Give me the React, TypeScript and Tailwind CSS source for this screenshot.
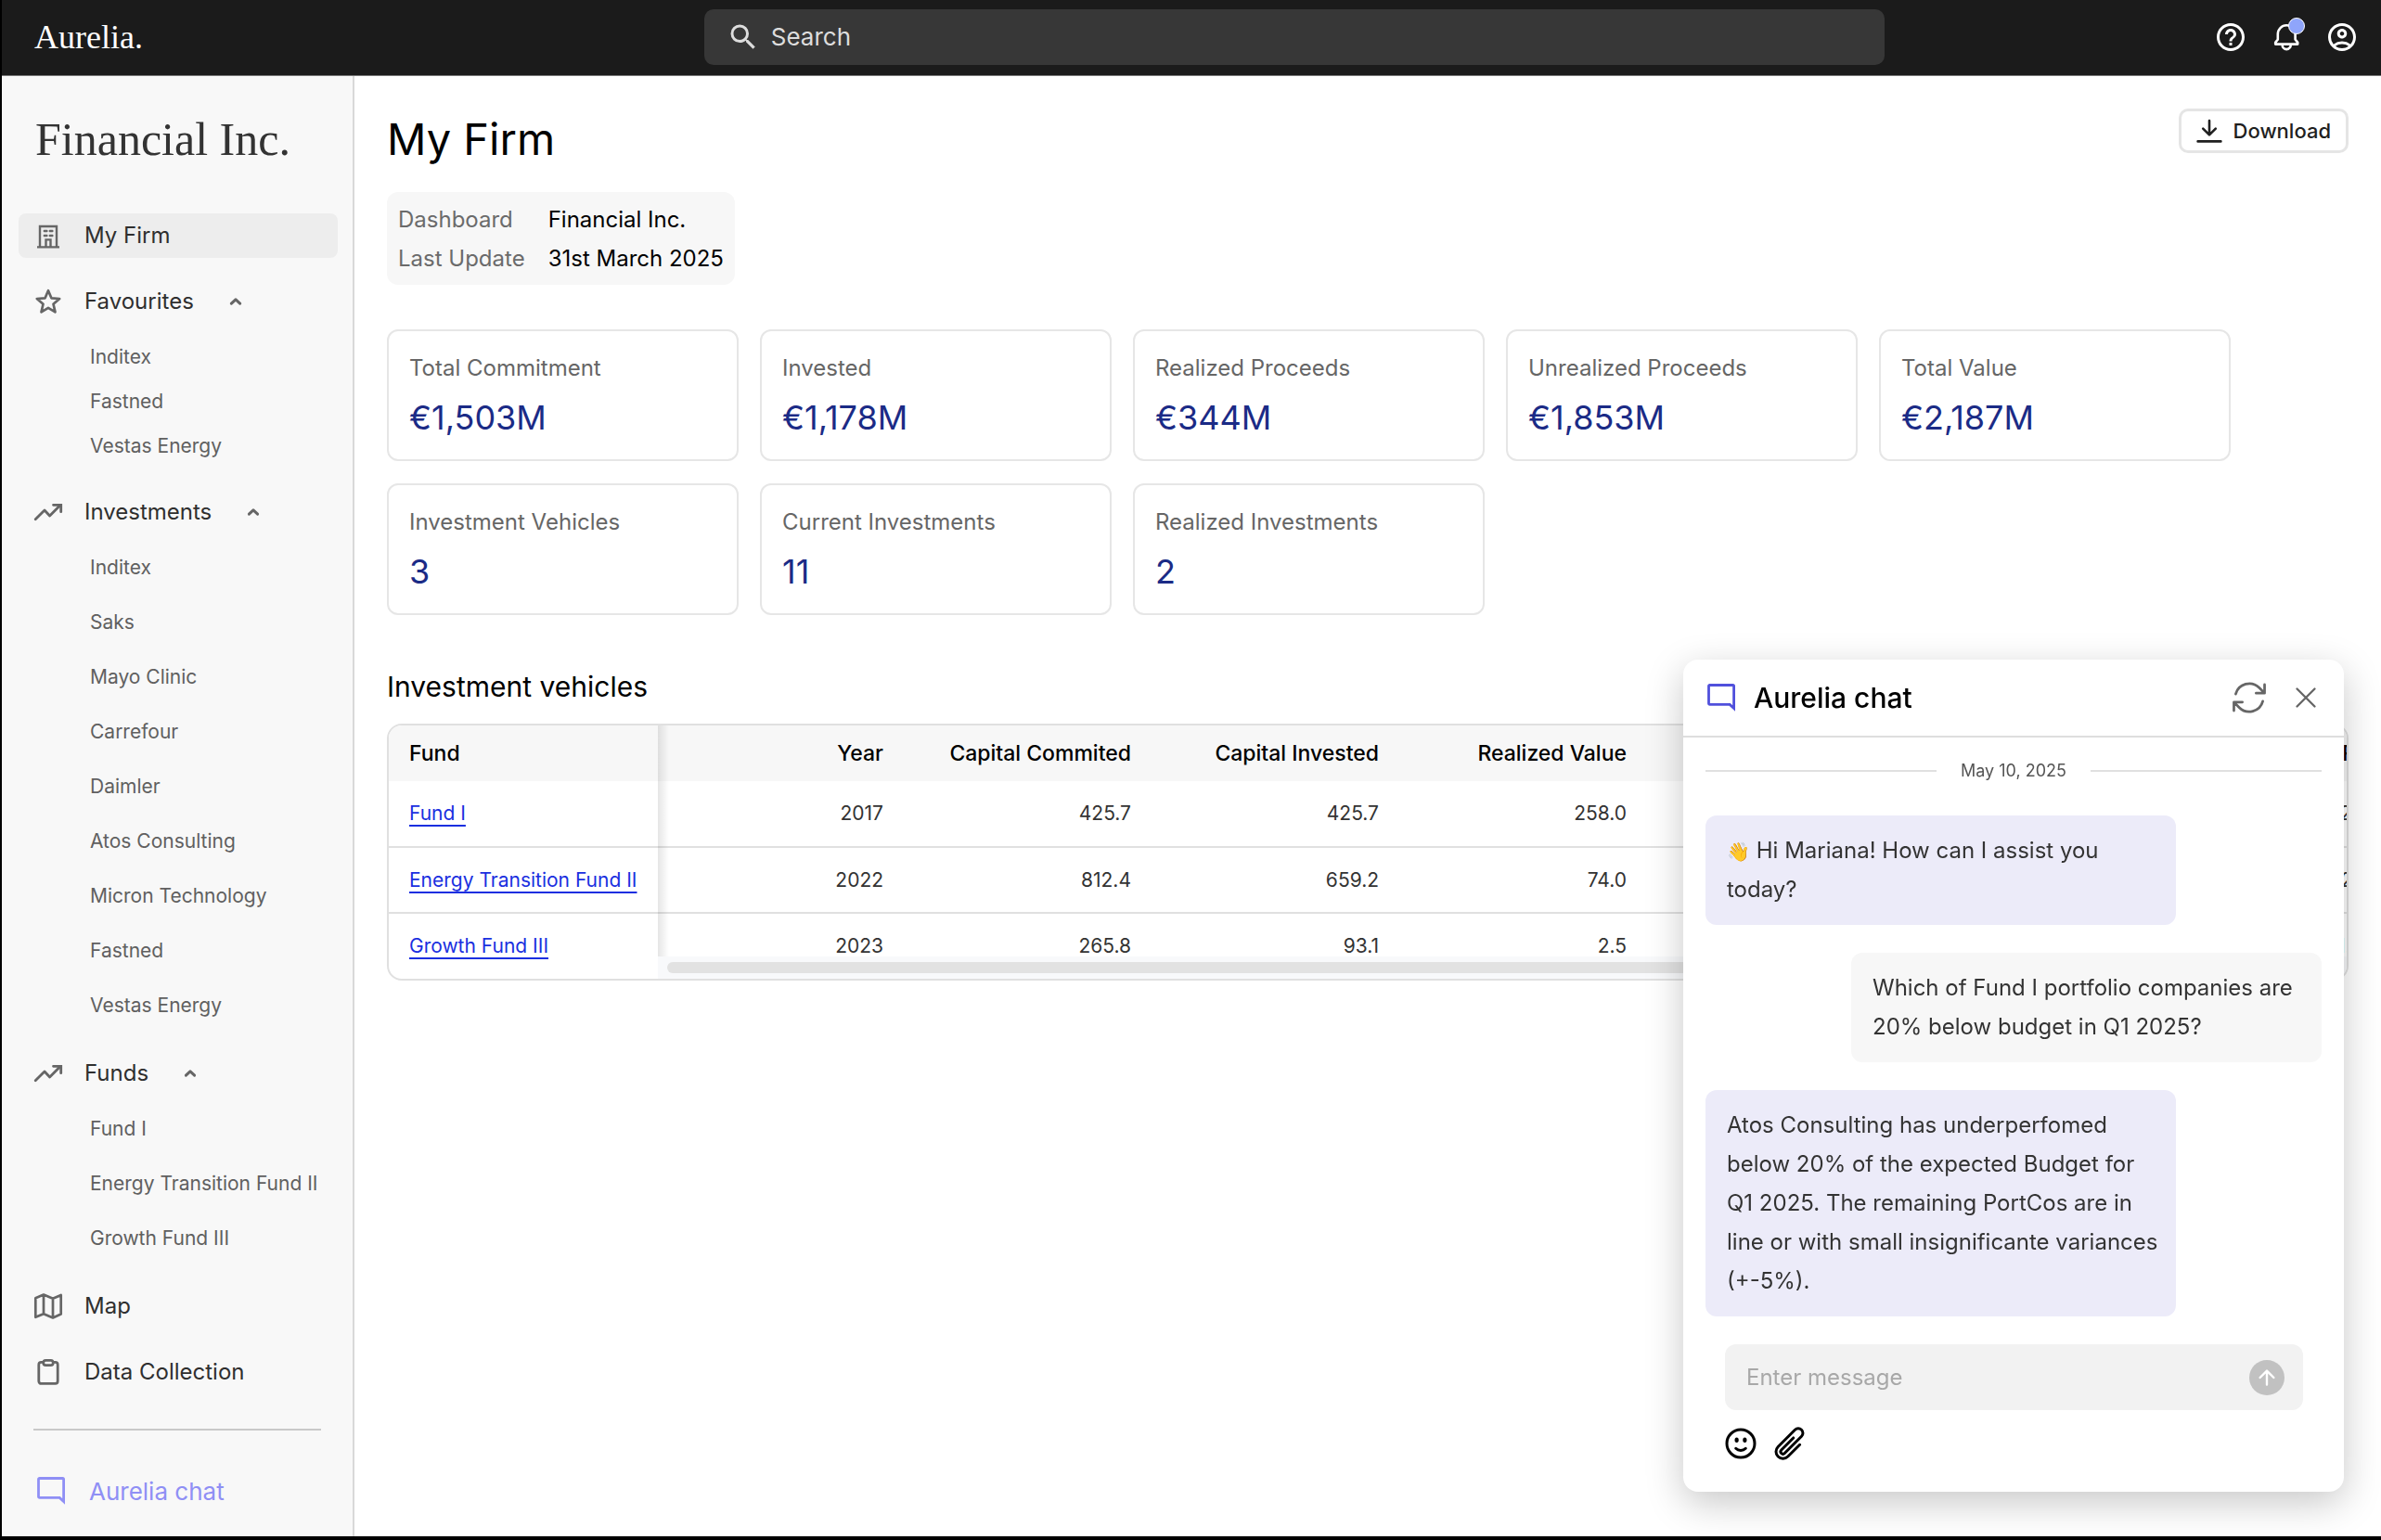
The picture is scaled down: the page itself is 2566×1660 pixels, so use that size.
import type { ReactNode } from "react";
import { MdHelpOutline, MdOutlineAccountCircle, MdSearch } from "react-icons/md";
import { HiOutlineArrowPath, HiOutlineFaceSmile, HiOutlinePaperClip, HiOutlineXMark } from "react-icons/hi2";

interface NavItem {
  label: string;
  icon: ReactNode;
  active?: boolean;
  compact?: boolean;
  children?: string[];
}

interface IconProps {
  className?: string;
}

const BuildingIcon = () => (
  <svg viewBox="0 0 32 32" className="h-8 w-8" fill="none" stroke="currentColor" strokeWidth="2.4">
    <path d="M7 28V6h18v22M4 28.4h24M13.5 28v-7.6h5V28" />
    <path d="M11.8 11h2.6M17.8 11h2.6M11.8 16h2.6M17.8 16h2.6" strokeLinecap="round" />
  </svg>
);

const StarIcon = () => (
  <svg viewBox="0 0 32 32" className="h-8 w-8" fill="none" stroke="currentColor" strokeWidth="2.7" strokeLinejoin="round">
    <path d="m16 4.2 3.4 8.1 8.8.7-6.7 5.8 2 8.6-7.5-4.6-7.5 4.6 2-8.6L3.8 13l8.8-.7Z" />
  </svg>
);

const TrendIcon = () => (
  <svg viewBox="0 0 32 32" className="h-8 w-8" fill="none" stroke="currentColor" strokeWidth="2.8" strokeLinecap="round">
    <path d="M2.2 23.8 12 14l5.6 6L29 8.6" strokeLinejoin="round" />
    <path d="M21.5 8.3h8.2v7.4" />
  </svg>
);

const MapIcon = () => (
  <svg viewBox="0 0 32 32" className="h-8 w-8" fill="none" stroke="currentColor" strokeWidth="2.7" strokeLinejoin="round">
    <path d="M2.3 7.2 11 3.6l10 4.2 8.7-3.8v20.6L21 28.4l-10-4.2-8.7 3.6ZM11 3.6v20.6M21 7.8v20.6" />
  </svg>
);

const ClipboardIcon = () => (
  <svg viewBox="0 0 32 32" className="h-8 w-8" fill="none" stroke="currentColor" strokeWidth="2.8">
    <rect x="5.8" y="5.4" width="20.4" height="23" rx="2.6" />
    <rect x="10.8" y="3.4" width="10.4" height="5.2" rx="2.4" fill="#f8f8f8" />
  </svg>
);

const ChatIcon = ({ className }: IconProps) => (
  <svg viewBox="0 0 30 30" className={className} fill="none" stroke="currentColor" strokeWidth="2.8">
    <path d="M28.6 26.6 24.2 22.4H2.6a1.1 1.1 0 0 1-1.1-1.1V2.6a1.1 1.1 0 0 1 1.1-1.1h24.9a1.1 1.1 0 0 1 1.1 1.1Z" />
  </svg>
);

const BellIcon = () => (
  <svg viewBox="0 0 36 36" className="h-9 w-9" fill="none" stroke="currentColor" strokeWidth="2.6" strokeLinejoin="round">
    <path d="M8.8 20.5v-5.8a9.4 9.4 0 0 1 18.8 0v5.8l2.6 3.4v1.7H6.2v-1.7Z" />
    <path d="M13.6 26.2a4.6 4.9 0 0 0 9.2 0" />
  </svg>
);

const DownloadIcon = () => (
  <svg viewBox="0 0 28 28" className="h-7 w-7" fill="none" stroke="currentColor" strokeWidth="2.6" strokeLinecap="round" strokeLinejoin="round">
    <path d="M14 3v15M7.2 11.6 14 18.4l6.8-6.8M1.6 25.4h24.8" />
  </svg>
);

const ChevronUp = () => (
  <svg viewBox="0 0 24 24" className="h-6 w-6 text-[#666666]" fill="none" stroke="currentColor" strokeWidth="3" strokeLinecap="round" strokeLinejoin="round">
    <path d="m7.4 14.2 4.6-4.4 4.6 4.4" />
  </svg>
);

const navItems: NavItem[] = [
  { label: "My Firm", icon: <BuildingIcon />, active: true },
  { label: "Favourites", icon: <StarIcon />, compact: true, children: ["Inditex", "Fastned", "Vestas Energy"] },
  {
    label: "Investments",
    icon: <TrendIcon />,
    children: [
      "Inditex",
      "Saks",
      "Mayo Clinic",
      "Carrefour",
      "Daimler",
      "Atos Consulting",
      "Micron Technology",
      "Fastned",
      "Vestas Energy",
    ],
  },
  { label: "Funds", icon: <TrendIcon />, children: ["Fund I", "Energy Transition Fund II", "Growth Fund III"] },
  { label: "Map", icon: <MapIcon /> },
  { label: "Data Collection", icon: <ClipboardIcon /> },
];

const stats = [
  { label: "Total Commitment", value: "€1,503M" },
  { label: "Invested", value: "€1,178M" },
  { label: "Realized Proceeds", value: "€344M" },
  { label: "Unrealized Proceeds", value: "€1,853M" },
  { label: "Total Value", value: "€2,187M" },
  { label: "Investment Vehicles", value: "3" },
  { label: "Current Investments", value: "11" },
  { label: "Realized Investments", value: "2" },
];

const columns = ["Year", "Capital Commited", "Capital Invested", "Realized Value", "Unrealized Value", "Total Value", "IRR"];

const funds = [
  { name: "Fund I", values: ["2017", "425.7", "425.7", "258.0", "635.2", "893.2", "2.4"] },
  { name: "Energy Transition Fund II", values: ["2022", "812.4", "659.2", "74.0", "1,108.3", "1,182.3", "2.0"] },
  { name: "Growth Fund III", values: ["2023", "265.8", "93.1", "2.5", "109.5", "112.0", "1.14"] },
];

const Header = () => (
  <header className="flex h-[82px] items-center border-b border-[#777777] bg-[#1b1b1b] pr-6 pb-[2px] pl-[35px] text-white">
    <a href="#" className="flex-[24] font-['Liberation_Serif',serif] text-[36px] leading-none">
      Aurelia.
    </a>
    <label className="flex h-[60px] w-[1272px] items-center gap-3 rounded-[10px] bg-[#373737] px-6">
      <MdSearch size={36} className="shrink-0 text-[#dddddd]" />
      <input
        type="search"
        aria-label="Search"
        placeholder="Search"
        className="w-full bg-transparent text-[26px] outline-none placeholder:text-[#dddddd]"
      />
    </label>
    <div className="flex flex-[17] items-center justify-end gap-6">
      <button aria-label="Help">
        <MdHelpOutline size={36} />
      </button>
      <button aria-label="Notifications" className="relative">
        <BellIcon />
        <span className="absolute -top-[3px] right-[-2px] h-[18px] w-[18px] rounded-full border border-white bg-[#8fa5fb]" />
      </button>
      <button aria-label="Account">
        <MdOutlineAccountCircle size={36} />
      </button>
    </div>
  </header>
);

const Sidebar = () => (
  <aside className="w-[380px] shrink-0 border-r-2 border-[#d9d9d9] bg-[#f8f8f8] px-[18px] pt-[38px]">
    <h2 className="pl-[18px] font-['Liberation_Serif',serif] text-[50px] leading-[60px] text-[#333333]">Financial Inc.</h2>
    <nav className="mt-[50px] mr-[-2px] flex flex-col gap-[23px]">
      {navItems.map((item) => (
        <div key={item.label}>
          <a
            href="#"
            className={`flex h-12 items-center rounded-lg px-4 text-2xl text-[#2f2f2f] ${item.active ? "bg-[#ededed]" : ""}`}
          >
            <span className="mr-[23px] text-[#666666]">{item.icon}</span>
            <span className="mr-[33px]">{item.label}</span>
            {item.children && <ChevronUp />}
          </a>
          {item.children && (
            <ul className={item.compact ? "mt-3" : "mt-[6px] mb-[-3px]"}>
              {item.children.map((child) => (
                <li key={child} className={`flex items-center pl-[77px] ${item.compact ? "h-12" : "h-[59px]"}`}>
                  <a href="#" className="text-[21px] whitespace-nowrap text-[#606060]">
                    {child}
                  </a>
                </li>
              ))}
            </ul>
          )}
        </div>
      ))}
    </nav>
    <hr className="mx-4 mt-[37px] border-t-2 border-[#c9c9c9]" />
    <button className="mt-[41px] flex h-12 items-center pl-5 text-[26px] text-[#8f8ff5]">
      <ChatIcon className="mr-[26px] h-[30px] w-[30px]" />
      Aurelia chat
    </button>
  </aside>
);

const StatCard = ({ label, value }: { label: string; value: string }) => (
  <div className="w-[379px] rounded-xl border-2 border-[#e6e6e6] px-[22px] pt-[22px] pb-[23px]">
    <p className="text-2xl leading-9 text-[#666666]">{label}</p>
    <p className="mt-[13px] text-[36px] leading-[44px] text-[#1b2b86]">{value}</p>
  </div>
);

const FundTable = () => (
  <div className="relative mt-5 overflow-hidden rounded-2xl border-2 border-[#e0e0e0]">
    <table className="w-full min-w-[2159px] table-fixed border-collapse text-[21px]">
      <thead>
        <tr className="h-[60px] bg-[#f7f7f7] text-[23px]">
          <th className="w-[290px] px-[22px] text-left font-medium">Fund</th>
          {columns.map((c) => (
            <th key={c} className="w-[267px] px-6 text-right font-medium whitespace-nowrap">
              {c}
            </th>
          ))}
        </tr>
      </thead>
      <tbody>
        {funds.map((f) => (
          <tr key={f.name} className="h-[71px] border-b-2 border-[#e0e0e0] last:border-b-0">
            <td className="px-[22px] whitespace-nowrap">
              <a href="#" className="text-[#1a2fe0] underline decoration-2 underline-offset-[5px]">
                {f.name}
              </a>
            </td>
            {f.values.map((v, i) => (
              <td key={columns[i]} className="px-6 text-right text-[#333333]">
                {v}
              </td>
            ))}
          </tr>
        ))}
      </tbody>
    </table>
    <div className="absolute top-0 bottom-6 left-[290px] w-3 bg-linear-to-r from-black/10 to-transparent" />
    <div className="absolute right-0 bottom-0 left-[290px] h-6 bg-[#f8f9fb] py-[6px] pl-[10px]">
      <div className="h-3 w-11/12 rounded-full bg-[#e2e2e2]" />
    </div>
  </div>
);

const Bubble = ({ mine, children }: { mine?: boolean; children: ReactNode }) => (
  <p
    className={`w-[507px] rounded-xl py-[17px] pr-3 pl-[23px] text-2xl leading-[42px] text-[#333333] ${
      mine ? "self-end bg-[#f7f7f7]" : "bg-[#ecebf9]"
    }`}
  >
    {children}
  </p>
);

const ChatPanel = () => (
  <section className="fixed right-10 bottom-[52px] w-[712px] rounded-2xl bg-white shadow-[0_12px_40px_rgba(0,0,0,0.22)]">
    <div className="flex h-[84px] items-center border-b-2 border-[#dedede] pr-[22px] pl-[26px]">
      <ChatIcon className="h-[30px] w-[30px] text-[#5050dc]" />
      <h2 className="ml-5 flex-1 text-3xl font-medium">Aurelia chat</h2>
      <button aria-label="Restart chat" className="text-[#666666]">
        <HiOutlineArrowPath size={44} />
      </button>
      <button aria-label="Close chat" className="ml-5 text-[#666666]">
        <HiOutlineXMark size={38} />
      </button>
    </div>
    <div className="flex flex-col gap-[34px] px-6 pt-[22px]">
      <div className="flex items-center gap-[26px] text-lg leading-7 text-[#555555]">
        <span className="h-[2px] flex-1 bg-[#e0e0e0]" />
        May 10, 2025
        <span className="h-[2px] flex-1 bg-[#e0e0e0]" />
      </div>
      <div className="flex flex-col gap-[30px]">
        <Bubble>
          <span className="text-xl">👋</span> Hi Mariana! How can I assist you today?
        </Bubble>
        <Bubble mine>Which of Fund I portfolio companies are 20% below budget in Q1 2025?</Bubble>
        <Bubble>
          Atos Consulting has underperfomed below 20% of the expected Budget for Q1 2025. The remaining PortCos are in
          line or with small insignificante variances (+-5%).
        </Bubble>
      </div>
    </div>
    <form className="pt-[30px] pr-11 pb-8 pl-[45px]">
      <div className="flex h-[71px] items-center rounded-xl bg-[#f2f2f2] pr-5 pl-[23px]">
        <input
          type="text"
          aria-label="Message"
          placeholder="Enter message"
          className="flex-1 bg-transparent text-2xl outline-none placeholder:text-[#a8a8a8]"
        />
        <button type="button" aria-label="Send" className="flex h-[38px] w-[38px] items-center justify-center rounded-full bg-[#c1c1c1] text-white">
          <svg viewBox="0 0 20 20" className="h-5 w-5" fill="none" stroke="currentColor" strokeWidth="2.4" strokeLinecap="round" strokeLinejoin="round">
            <path d="M10 17.6V2.8M2.6 10 10 2.6l7.4 7.4" />
          </svg>
        </button>
      </div>
      <div className="mt-4 -ml-[3px] flex gap-[13px]">
        <button type="button" aria-label="Add emoji">
          <HiOutlineFaceSmile size={40} strokeWidth={1.8} />
        </button>
        <button type="button" aria-label="Attach file">
          <HiOutlinePaperClip size={40} strokeWidth={1.8} />
        </button>
      </div>
    </form>
  </section>
);

export default function App() {
  return (
    <div className="flex min-h-screen flex-col border-b-4 border-l-2 border-black bg-white font-['Inter','Liberation_Sans',sans-serif] text-black">
      <Header />
      <div className="flex flex-1">
        <Sidebar />
        <main className="min-w-0 flex-1 px-[35px] pt-[35px]">
          <div className="flex items-start justify-between">
            <h1 className="pt-[3px] text-[47px] leading-[60px]">My Firm</h1>
            <button className="flex h-12 items-center gap-3 rounded-[10px] border-[3px] border-[#e5e5e5] px-4 text-[22px] font-medium text-[#1f1f1f]">
              <DownloadIcon />
              Download
            </button>
          </div>
          <dl className="mt-[27px] grid w-fit grid-cols-[auto_auto] gap-x-[25px] rounded-xl bg-[#f7f7f7] px-3 pt-[9px] pb-[7px] text-2xl leading-[42px]">
            <dt className="text-[#6b6b6b]">Dashboard</dt>
            <dd>Financial Inc.</dd>
            <dt className="text-[#6b6b6b]">Last Update</dt>
            <dd>31st March 2025</dd>
          </dl>
          <div className="mt-12 flex flex-wrap gap-x-[23px] gap-y-6">
            {stats.map((s) => (
              <StatCard key={s.label} {...s} />
            ))}
          </div>
          <h2 className="mt-[57px] text-3xl leading-10">Investment vehicles</h2>
          <FundTable />
        </main>
      </div>
      <ChatPanel />
    </div>
  );
}
